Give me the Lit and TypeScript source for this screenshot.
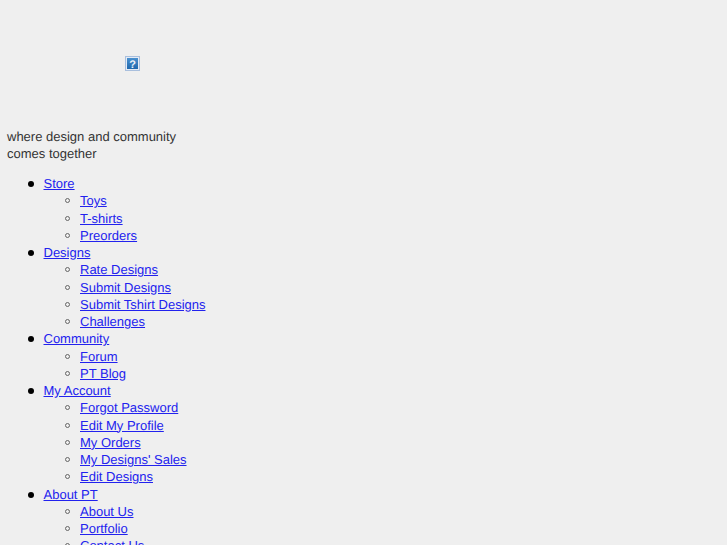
import { LitElement, html, css } from "lit";
import { customElement } from "lit/decorators.js";

type Item = [string, string[]];
const NAV: Item[] = [
  ["Store", ["Toys", "T-shirts", "Preorders"]],
  ["Designs", ["Rate Designs", "Submit Designs", "Submit Tshirt Designs", "Challenges"]],
  ["Community", ["Forum", "PT Blog"]],
  ["My Account", ["Forgot Password", "Edit My Profile", "My Orders", "My Designs' Sales", "Edit Designs"]],
  ["About PT", ["About Us", "Portfolio", "Contact Us"]],
];

@customElement("app-root")
export class AppRoot extends LitElement {
  static styles = css`
    :host {
      display: block;
      height: 545px;
      overflow: hidden;
      background: #efefef;
      color: #333;
      font-family: "Liberation Sans", Arial, sans-serif;
      font-size: 13px;
      line-height: 17.25px;
      text-rendering: geometricPrecision;
    }
    .logo { height: 128px; padding: 56px 0 0 125px; box-sizing: border-box; }
    .logo svg { display: block; }
    .tag { margin: 0 0 0 7px; width: 190px; }
    ul { margin: 0; padding: 0 0 0 36.5px; list-style: none; }
    .top { margin: 12.5px 0 0 7px; }
    li { position: relative; }
    li::before {
      content: "";
      position: absolute;
      left: -15.5px;
      top: 6px;
      width: 6px;
      height: 6px;
      border-radius: 50%;
      background: #000;
    }
    ul ul li::before {
      left: -15px;
      top: 6px;
      width: 3px;
      height: 3px;
      background: transparent;
      border: 1.2px solid #666;
    }
    a { color: #22e; text-decoration: underline; }
  `;
  render() {
    return html`
      <div class="logo">
        <svg width="15" height="15" viewBox="0 0 15 15">
          <defs>
            <linearGradient id="g" x1="0" y1="0" x2="0" y2="1">
              <stop offset="0" stop-color="#4a90cf"/>
              <stop offset="1" stop-color="#1f68ad"/>
            </linearGradient>
          </defs>
          <rect x="0.5" y="0.5" width="14" height="14" fill="#e4ebf5" stroke="#a9bfdd"/>
          <rect x="2" y="2" width="11" height="11" fill="url(#g)"/>
          <text x="7.5" y="11.5" text-anchor="middle" font-size="11" font-weight="700" font-family="Liberation Sans" fill="#eef4fb">?</text>
        </svg>
      </div>
      <p class="tag">where design and community comes together</p>
      <ul class="top">
        ${NAV.map(([label, kids]) => html`<li>
          <a href="#">${label}</a>
          <ul>${kids.map((k) => html`<li><a href="#">${k}</a></li>`)}</ul>
        </li>`)}
      </ul>
    `;
  }
}
